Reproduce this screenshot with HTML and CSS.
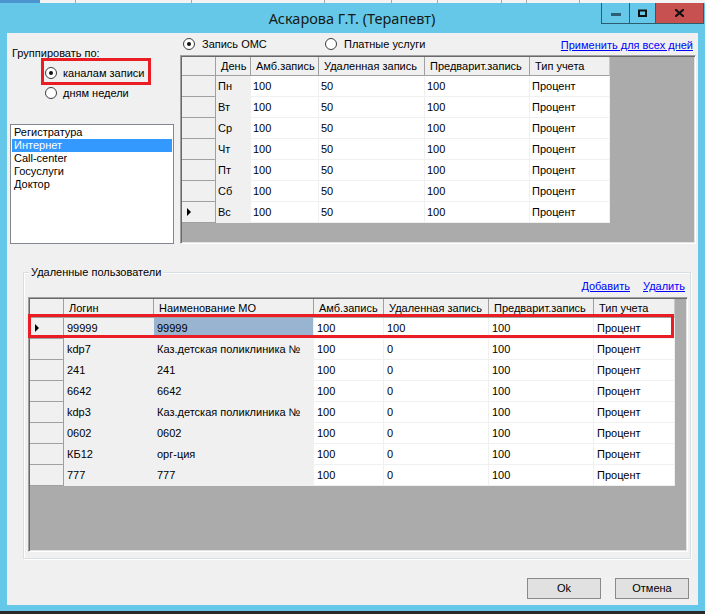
FILE: index.html
```html
<!DOCTYPE html>
<html>
<head>
<meta charset="utf-8">
<title>Аскарова Г.Т. (Терапевт)</title>
<link rel="stylesheet" href="styles.css">
</head>
<body>
<div class="strip"><i class="s1"></i><i class="s2"></i><i class="s3"></i><i class="s4"></i><i class="s5"></i><i class="s6"></i><i class="s7"></i><i class="s8"></i><i class="s9"></i></div>
<div class="window">
  <div class="titlebar">
    <div class="title">Аскарова Г.Т. (Терапевт)</div>
    <div class="wbtns">
      <div class="wb wmin"><svg width="10" height="3" viewBox="0 0 10 3"><rect x="0" y="0" width="10" height="3" fill="#2f5f74"/></svg></div>
      <div class="wb wmax"><svg width="9" height="8" viewBox="0 0 9 8"><path d="M1 1.5H8V7H1Z" fill="none" stroke="#111" stroke-width="2"/></svg></div>
      <div class="wb wclose"><svg width="9" height="8" viewBox="0 0 9 8"><path d="M1 1L8 7M8 1L1 7" stroke="#111" stroke-width="2.2" stroke-linecap="square"/></svg></div>
    </div>
  </div>
  <div class="client">
    <div class="top">
      <div class="left">
        <div class="lbl">Группировать по:</div>
        <div class="radios">
          <div class="radio boxed"><span class="rc on"></span><span>каналам записи</span></div>
          <div class="radio"><span class="rc"></span><span>дням недели</span></div>
        </div>
        <div class="list">
          <div class="item">Регистратура</div>
          <div class="item sel">Интернет</div>
          <div class="item">Call-center</div>
          <div class="item">Госуслуги</div>
          <div class="item">Доктор</div>
        </div>
      </div>
      <div class="right">
        <div class="opts">
          <div class="opt opt1"><span class="rc on"></span><span>Запись ОМС</span></div>
          <div class="opt"><span class="rc"></span><span>Платные услуги</span></div>
          <a class="link apply">Применить для всех дней</a>
        </div>
        <div class="grid g1">
          <div class="row hdr"><div class="rh"></div><div class="hc">День</div><div class="hc">Амб.запись</div><div class="hc">Удаленная запись</div><div class="hc">Предварит.запись</div><div class="hc">Тип учета</div></div>
          <div class="row"><div class="rh"></div><div class="c ro">Пн</div><div class="c">100</div><div class="c">50</div><div class="c">100</div><div class="c">Процент</div></div>
          <div class="row"><div class="rh"></div><div class="c ro">Вт</div><div class="c">100</div><div class="c">50</div><div class="c">100</div><div class="c">Процент</div></div>
          <div class="row"><div class="rh"></div><div class="c ro">Ср</div><div class="c">100</div><div class="c">50</div><div class="c">100</div><div class="c">Процент</div></div>
          <div class="row"><div class="rh"></div><div class="c ro">Чт</div><div class="c">100</div><div class="c">50</div><div class="c">100</div><div class="c">Процент</div></div>
          <div class="row"><div class="rh"></div><div class="c ro">Пт</div><div class="c">100</div><div class="c">50</div><div class="c">100</div><div class="c">Процент</div></div>
          <div class="row"><div class="rh"></div><div class="c ro">Сб</div><div class="c">100</div><div class="c">50</div><div class="c">100</div><div class="c">Процент</div></div>
          <div class="row"><div class="rh"><span class="arrow"></span></div><div class="c ro">Вс</div><div class="c">100</div><div class="c">50</div><div class="c">100</div><div class="c">Процент</div></div>
        </div>
      </div>
    </div>
    <div class="group">
      <div class="glabel">Удаленные пользователи</div>
      <div class="links"><a class="link">Добавить</a><a class="link">Удалить</a></div>
      <div class="grid g2">
        <div class="row hdr"><div class="rh"></div><div class="hc">Логин</div><div class="hc">Наименование МО</div><div class="hc">Амб.запись</div><div class="hc">Удаленная запись</div><div class="hc">Предварит.запись</div><div class="hc">Тип учета</div></div>
        <div class="row marked"><div class="rh"><span class="arrow"></span></div><div class="c ro">99999</div><div class="c hl">99999</div><div class="c">100</div><div class="c">100</div><div class="c">100</div><div class="c">Процент</div></div>
        <div class="row"><div class="rh"></div><div class="c ro">kdp7</div><div class="c ro">Каз.детская поликлиника №</div><div class="c">100</div><div class="c">0</div><div class="c">100</div><div class="c">Процент</div></div>
        <div class="row"><div class="rh"></div><div class="c ro">241</div><div class="c ro">241</div><div class="c">100</div><div class="c">0</div><div class="c">100</div><div class="c">Процент</div></div>
        <div class="row"><div class="rh"></div><div class="c ro">6642</div><div class="c ro">6642</div><div class="c">100</div><div class="c">0</div><div class="c">100</div><div class="c">Процент</div></div>
        <div class="row"><div class="rh"></div><div class="c ro">kdp3</div><div class="c ro">Каз.детская поликлиника №</div><div class="c">100</div><div class="c">0</div><div class="c">100</div><div class="c">Процент</div></div>
        <div class="row"><div class="rh"></div><div class="c ro">0602</div><div class="c ro">0602</div><div class="c">100</div><div class="c">0</div><div class="c">100</div><div class="c">Процент</div></div>
        <div class="row"><div class="rh"></div><div class="c ro">КБ12</div><div class="c ro">орг-ция</div><div class="c">100</div><div class="c">0</div><div class="c">100</div><div class="c">Процент</div></div>
        <div class="row"><div class="rh"></div><div class="c ro">777</div><div class="c ro">777</div><div class="c">100</div><div class="c">0</div><div class="c">100</div><div class="c">Процент</div></div>
      </div>
    </div>
    <div class="btns">
      <div class="btn">Ok</div>
      <div class="btn">Отмена</div>
    </div>
  </div>
</div>
</body>
</html>
```
FILE: styles.css
```css
*, *::before, *::after { box-sizing: border-box; }
html, body { margin: 0; padding: 0; }
body {
  width: 705px;
  height: 614px;
  overflow: hidden;
  background: #65c8e9;
  font-family: "Liberation Sans", Arial, sans-serif;
  font-size: 11px;
  line-height: 13px;
  color: #000;
}

/* sliver of whatever is behind the window */
.strip { height: 3px; display: flex; background: #f3f3f3; }
.strip i { display: block; height: 3px; border-right: 1px solid #a8a8a8; }
.strip .s1 { width: 40px; background: #4a94cf; border-right: 0; }
.strip .s2 { width: 36px; }
.strip .s3 { width: 116px; }
.strip .s4 { width: 133px; }
.strip .s5 { width: 67px; }
.strip .s6 { width: 46px; }
.strip .s7 { width: 64px; }
.strip .s8 { width: 25px; }
.strip .s9 { width: 53px; }

.window {
  height: 611px;
  background: #65c8e9;
  border-bottom: 3px solid #2a2a2a;
  padding: 0 7px 6px;
  display: flex;
  flex-direction: column;
}

.titlebar {
  height: 30px;
  margin: 0 -7px;
  padding-right: 1px;
  display: grid;
  grid-template-columns: 1fr auto 1fr;
}
.title {
  grid-column: 2;
  font-family: "Noto Sans", "Open Sans", sans-serif;
  font-size: 14.5px;
  line-height: 30px;
  color: #151a15;
  white-space: nowrap;
}
.wbtns {
  grid-column: 3;
  justify-self: end;
  align-self: start;
  display: flex;
  height: 21px;
}
.wb {
  height: 21px;
  border: 1px solid #2c5c6e;
  border-top: 0;
  margin-left: -1px;
  display: flex;
  align-items: center;
  justify-content: center;
}
.wmin { width: 29px; padding-top: 3px; }
.wmax { width: 27px; padding-bottom: 1px; }
.wclose { width: 49px; background: #c75050; padding-bottom: 1px; }

.client {
  height: 572px;
  background: #f0f0f0;
  display: flex;
  flex-direction: column;
}

.top { display: flex; height: 211px; }

.left {
  width: 173px;
  padding: 14px 0 0 5px;
  display: flex;
  flex-direction: column;
  align-items: flex-start;
}
.lbl { height: 13px; white-space: nowrap; }
.radios { margin: 3px 0 0 33px; position: relative; }
.radio { display: flex; align-items: center; height: 20px; gap: 6px; white-space: nowrap; }
.radio.boxed::before {
  content: "";
  position: absolute;
  left: -4px;
  top: -5px;
  width: 110px;
  height: 27px;
  border: 3px solid #ea1c24;
}

.rc {
  width: 12px;
  height: 12px;
  border-radius: 50%;
  border: 1px solid #3c3c3c;
  background: #fff;
  display: flex;
  align-items: center;
  justify-content: center;
  flex: none;
}
.rc.on::after {
  content: "";
  width: 4px;
  height: 4px;
  border-radius: 50%;
  background: #111;
}

.list {
  margin: 21px 0 0 -2px;
  width: 164px;
  height: 121px;
  border: 1px solid #828790;
  background: #fff;
  padding: 1px;
}
.item { height: 13px; padding-left: 2px; white-space: nowrap; }
.item.sel { background: #3399ff; color: #fff; }

.right { width: 516px; display: flex; flex-direction: column; }
.opts { height: 22px; display: flex; align-items: center; }
.opt { display: flex; align-items: center; gap: 7px; white-space: nowrap; }
.opt1 { margin-left: 3px; width: 142px; }
.link { color: #0000ff; text-decoration: underline; white-space: nowrap; cursor: pointer; }
.apply { margin-left: auto; margin-right: 3px; margin-top: 3px; }

.grid {
  border: 1px solid;
  border-color: #a0a0a0 #ffffff #ffffff #a0a0a0;
  padding: 1px;
  box-shadow: inset 1px 1px 0 #696969, inset -1px -1px 0 #e3e3e3;
  background: #ababab;
  display: flex;
  flex-direction: column;
}
.g1 { height: 189px; }
.g2 { height: 255px; width: 660px; margin: 4px 0 0 4px; }

.row { display: grid; justify-content: start; }
.g1 .row { grid-template-columns: 34px 35px 68px 106px 105px 80px; }
.g2 .row { grid-template-columns: 34px 90px 160px 70px 105px 105px 81px; }

.row > div { white-space: nowrap; overflow: hidden; }
.hdr > div { height: 19px; line-height: 18px; background: #f0f0f0; border-bottom: 1px solid #a0a0a0; }
.hc { padding-left: 5px; border-right: 1px solid #a0a0a0; }
.hdr .hc:last-child { border-right-color: #c8c8c8; }
.rh {
  background: #f0f0f0;
  border-right: 1px solid #a0a0a0;
  border-bottom: 1px solid #a0a0a0;
  height: 21px;
  display: flex;
  align-items: center;
  padding-left: 5px;
}
.hdr .rh { display: block; }
.c {
  height: 21px;
  line-height: 20px;
  padding-left: 2px;
  background: #fff;
  border-right: 1px solid #f0f0f0;
  border-bottom: 1px solid #f0f0f0;
}
.c.ro { background: #f0f0f0; }
.c.hl { background: #99b4d1; }
.g2 .c { padding-left: 3px; }

.arrow {
  width: 0;
  height: 0;
  border-left: 4px solid #000;
  border-top: 4px solid transparent;
  border-bottom: 4px solid transparent;
}

.row.marked { position: relative; }
.row.marked::after {
  content: "";
  position: absolute;
  left: -2px;
  top: -4px;
  width: 646px;
  height: 24px;
  border: 3px solid #ea1c24;
}

.group {
  margin: 28px 0 0 16px;
  width: 668px;
  height: 287px;
  border: 1px solid #d5dfe5;
  box-shadow: inset 1px 1px 0 #ffffff, 1px 1px 0 #ffffff;
  display: flex;
  flex-direction: column;
  align-items: flex-start;
}
.glabel {
  margin: -7px 0 0 5px;
  padding: 0 2px;
  height: 13px;
  background: #f0f0f0;
  white-space: nowrap;
}
.links {
  align-self: stretch;
  display: flex;
  justify-content: flex-end;
  gap: 13px;
  padding-right: 5px;
  margin-top: 1px;
  height: 13px;
}

.btns {
  display: flex;
  justify-content: flex-end;
  gap: 14px;
  margin-top: 19px;
  padding-right: 9px;
}
.btn {
  width: 74px;
  height: 21px;
  border: 1px solid #8a8a8a;
  background: #e1e1e1;
  display: flex;
  align-items: center;
  justify-content: center;
}
```
